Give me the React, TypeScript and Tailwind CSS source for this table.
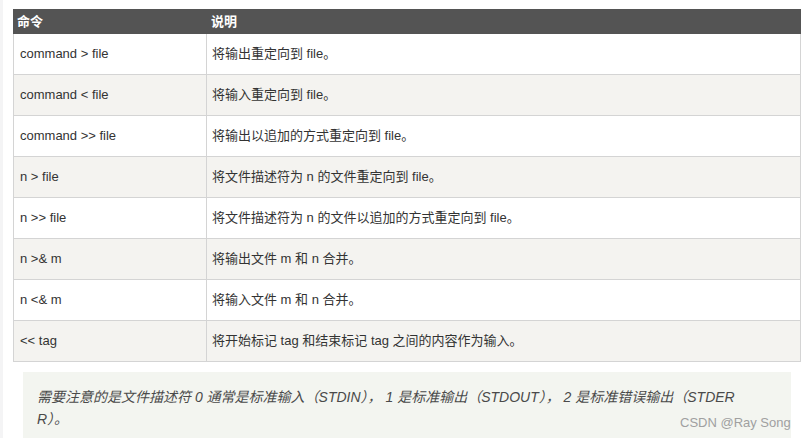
import React from "react";

const rows: [string, string][] = [
  ["command > file", "将输出重定向到 file。"],
  ["command < file", "将输入重定向到 file。"],
  ["command >> file", "将输出以追加的方式重定向到 file。"],
  ["n > file", "将文件描述符为 n 的文件重定向到 file。"],
  ["n >> file", "将文件描述符为 n 的文件以追加的方式重定向到 file。"],
  ["n >& m", "将输出文件 m 和 n 合并。"],
  ["n <& m", "将输入文件 m 和 n 合并。"],
  ["<< tag", "将开始标记 tag 和结束标记 tag 之间的内容作为输入。"],
];

export default function App() {
  return (
    <div
      className="relative flex w-[806px] h-[438px] overflow-hidden bg-white text-[#333]"
      style={{ fontFamily: '"Liberation Sans", Arial, "Noto Sans CJK SC", sans-serif' }}
    >
      <div className="w-[3px] shrink-0 bg-[#f4f4f5]" />
      <div className="flex flex-col pl-[10px] pt-[9px]">
        <div className="flex shrink-0 w-[788px] h-[25px] bg-[#545454] text-white text-[13px] font-bold items-center">
          <div className="w-[194px] pl-[4px]">命令</div>
          <div className="pl-[4px]">说明</div>
        </div>
        <div className="shrink-0 w-[788px] border-x border-[#d4d4d4]">
          {rows.map(([a, b], i) => (
            <div
              key={i}
              className={`flex h-[41px] border-b border-[#d4d4d4] text-[13px] ${i % 2 === 1 ? "bg-[#f4f3f0]" : "bg-white"}`}
            >
              <div className="w-[193px] shrink-0 border-r border-[#d4d4d4] flex items-center pl-[6px]">
                {a}
              </div>
              <div className="flex items-center pl-[5px]">{b}</div>
            </div>
          ))}
        </div>
        <div className="shrink-0 ml-[10px] mt-[10px] w-[768px] h-[80px] bg-[#f3f5f0] pl-[14px] pt-[14px] text-[14px] leading-[22px] italic text-[#4a4a4a]">
          需要注意的是文件描述符 0 通常是标准输入（STDIN）， 1 是标准输出（STDOUT）， 2 是标准错误输出（STDER
          <br />
          R）。
        </div>
      </div>
      <div className="absolute left-[680px] top-[413px] text-[13px] text-[#a0a0a0]">CSDN @Ray Song</div>
    </div>
  );
}
